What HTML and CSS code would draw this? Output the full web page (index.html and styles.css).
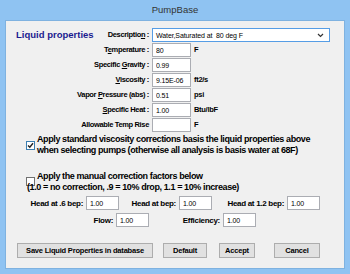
FILE: index.html
```html
<!DOCTYPE html>
<html lang="en">
<head>
    <meta charset="UTF-8">
    <title>PumpBase</title>
    <link rel="stylesheet" href="styles.css">
</head>
<body>
    <div class="window">
        <div class="titlebar">PumpBase</div>

        <div class="client">
            <!-- Liquid properties -->
            <div class="props">
                <div class="label first">
                    <span class="heading">Liquid properties</span>
                    <span>Descriptio<u>n</u> :</span>
                </div>
                <div class="combo">
                    <span>Water,Saturated at&nbsp; 80 deg F</span>
                    <svg width="7" height="5" viewBox="0 0 7 5"><path d="M1 1 L3.5 3.5 L6 1" fill="none" stroke="#333" stroke-width="1.2"/></svg>
                </div>

                <div class="label">T<u>e</u>mperature :</div>
                <input class="field" type="text" value="80">
                <div class="unit">F</div>

                <div class="label">Specific <u>G</u>ravity :</div>
                <input class="field" type="text" value="0.99">
                <div class="unit"></div>

                <div class="label"><u>V</u>iscosity :</div>
                <input class="field" type="text" value="9.15E-06">
                <div class="unit">ft2/s</div>

                <div class="label">Vapor <u>P</u>ressure (abs) :</div>
                <input class="field" type="text" value="0.51">
                <div class="unit">psi</div>

                <div class="label"><u>S</u>pecific Heat :</div>
                <input class="field" type="text" value="1.00">
                <div class="unit">Btu/lbF</div>

                <div class="label">Allowable Temp Rise</div>
                <input class="field" type="text" value="">
                <div class="unit">F</div>
            </div>

            <!-- Options -->
            <div class="check">
                <span class="box checked">
                    <svg width="7" height="7" viewBox="0 0 7 7"><path d="M1 3.4 L2.8 5.3 L6 1.2" fill="none" stroke="#222" stroke-width="1.4"/></svg>
                </span>
                <span class="check-text">Apply standard viscosity corrections basis the liquid properties above<br>when selecting pumps (otherwise all analysis is basis water at 68F)</span>
            </div>

            <div class="manual">
                <div class="check top">
                    <span class="box"></span>
                    <span class="check-text">Apply the manual correction factors below</span>
                </div>
                <div class="check-text note">(1.0 = no correction, .9 = 10% drop, 1.1 = 10% increase)</div>
            </div>

            <div class="factors">
                <div class="pair-row">
                    <label class="w80">Head at .6 bep:</label>
                    <input class="small-field" type="text" value="1.00">
                    <label class="w60">Head at bep:</label>
                    <input class="small-field" type="text" value="1.00">
                    <label class="w75">Head at 1.2 bep:</label>
                    <input class="small-field" type="text" value="1.00">
                </div>
                <div class="pair-row">
                    <label class="w110">Flow:</label>
                    <input class="small-field" type="text" value="1.00">
                    <label class="w74">Efficiency:</label>
                    <input class="small-field" type="text" value="1.00">
                </div>
            </div>

            <div class="buttons">
                <button class="btn save">Save Liquid Properties in database</button>
                <button class="btn default">Default</button>
                <button class="btn accept">Accept</button>
                <button class="btn cancel">Cancel</button>
            </div>
        </div>
    </div>
</body>
</html>
```

FILE: styles.css
```css
* {
    box-sizing: border-box;
}
body {
    margin: 0;
    font-family: "Liberation Sans", Arial, sans-serif;
    color: #000;
}
.window {
    width: 350px;
    height: 274px;
    background-color: #8fc3f2;
}
.titlebar {
    height: 20px;
    line-height: 20px;
    text-align: center;
    font-size: 9.5px;
    color: #333;
}
.client {
    margin: 0 5px;
    height: 249px;
    background-color: #f0f0f0;
    border: 1px solid #7fb2e0;
    padding-top: 7px;
}
.props {
    display: grid;
    grid-template-columns: 143px 39px auto;
    grid-auto-rows: 14px;
    column-gap: 3px;
    row-gap: 1px;
}
.label {
    font-weight: bold;
    font-size: 7.5px;
    letter-spacing: -0.35px;
    line-height: 14px;
    text-align: right;
    white-space: nowrap;
}
.label.first {
    display: flex;
    justify-content: space-between;
    padding-left: 10px;
}
.heading {
    font-size: 9.5px;
    letter-spacing: 0;
    color: #1b1b8f;
}
.combo {
    grid-column: 2 / 4;
    width: 178px;
    border: 1px solid #569de5;
    background-color: #fff;
    font-size: 7px;
    letter-spacing: -0.1px;
    padding: 0 5px 0 3px;
    display: flex;
    justify-content: space-between;
    align-items: center;
}
.field, .small-field {
    height: 14px;
    border: 1px solid #abadb3;
    background-color: #fff;
    font-family: "Liberation Sans", Arial, sans-serif;
    font-size: 7px;
    letter-spacing: -0.15px;
    padding: 0 3px;
    margin: 0;
    outline: none;
    color: #000;
}
.field {
    width: 39px;
}
.unit {
    font-weight: bold;
    font-size: 7.5px;
    letter-spacing: -0.3px;
    line-height: 14px;
}
.check {
    display: flex;
    align-items: center;
    padding-left: 20px;
    margin-top: 2px;
}
.box {
    width: 9px;
    height: 9px;
    border: 1px solid #707070;
    background-color: #fff;
    margin-right: 2px;
    flex: none;
    display: flex;
    align-items: center;
    justify-content: center;
}
.box.checked {
    border-color: #3c7fb1;
}
.check-text {
    font-weight: bold;
    font-size: 9px;
    letter-spacing: -0.4px;
    line-height: 11px;
    white-space: nowrap;
}
.manual {
    margin-top: 15px;
}
.check.top {
    margin-top: 0;
    align-items: flex-start;
}
.check.top .box {
    margin-top: 6px;
    margin-bottom: -6px;
}
.note {
    padding-left: 21px;
}
.factors {
    margin-top: 3px;
    display: flex;
    flex-direction: column;
    row-gap: 3px;
}
.pair-row {
    display: flex;
    align-items: center;
    height: 14px;
}
.pair-row label {
    font-weight: bold;
    font-size: 8px;
    letter-spacing: -0.3px;
    text-align: right;
    padding-right: 3px;
    white-space: nowrap;
}
.small-field {
    width: 33px;
}
.w60 { width: 60px; }
.w74 { width: 74px; }
.w75 { width: 75px; }
.w80 { width: 80px; }
.w110 { width: 110px; }
.buttons {
    margin-top: 16px;
    display: flex;
    padding-left: 11px;
}
.btn {
    height: 15px;
    border: 1px solid #adadad;
    background-color: #e1e1e1;
    font-family: "Liberation Sans", Arial, sans-serif;
    font-weight: bold;
    font-size: 7.5px;
    letter-spacing: -0.2px;
    padding: 0;
    color: #000;
    white-space: nowrap;
}
.save { width: 136px; }
.default { width: 44px; margin-left: 10px; }
.accept { width: 36px; margin-left: 12px; }
.cancel { width: 46px; margin-left: 19px; }
```
